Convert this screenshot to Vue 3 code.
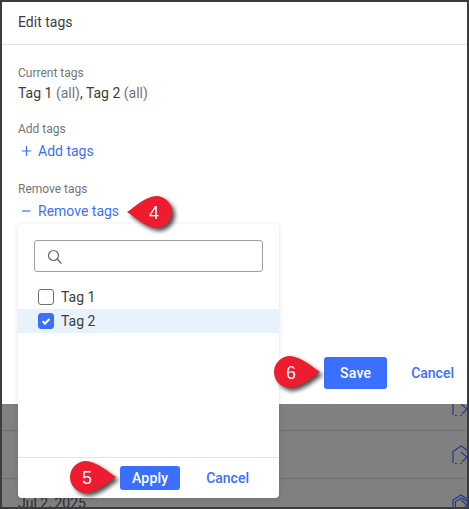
<template>
  <div class="frame">
    <div class="dialog">
      <div class="title">Edit tags</div>
      <div class="body">
        <div class="field">
          <div class="label">Current tags</div>
          <div class="value">Tag 1 <span class="muted">(all)</span>, Tag 2 <span class="muted">(all)</span></div>
        </div>
        <div class="field">
          <div class="label">Add tags</div>
          <a class="link">
            <svg width="12" height="12" viewBox="0 0 12 12"><path d="M5.5 1v10M.8 6h9.4" stroke="#3b6fff" stroke-width="1.2" fill="none" /></svg>
            Add tags
          </a>
        </div>
        <div class="field">
          <div class="label">Remove tags</div>
          <a class="link">
            <svg width="12" height="12" viewBox="0 0 12 12"><path d="M1 6h8.4" stroke="#3b6fff" stroke-width="1.2" fill="none" /></svg>
            Remove tags
          </a>
        </div>
      </div>
      <div class="actions">
        <button class="primary save">Save</button>
        <button class="ghost">Cancel</button>
      </div>
    </div>

    <div class="backdrop">
      <div v-for="row in rows" :key="row.id" class="row">
        <span class="date">{{ row.date }}</span>
        <svg class="row-icon" width="20" height="20" viewBox="0 0 20 20" fill="none" stroke="#24398c" stroke-width="1.2">
          <template v-if="row.stacked">
            <path d="M1 15V7l8-5 8 5" />
            <path d="M3.500 18V8.500l6-3.500 6 3.500" />
          </template>
          <path v-if="!row.stacked" d="M1 18V6.500L9 1l6 4" />
          <path v-if="!row.stacked" d="M3 18.500h2M8 18.500h2" />
          <path d="M9 7l6 5-5 5" />
        </svg>
      </div>
    </div>

    <div class="menu">
      <div class="search">
        <svg width="15" height="15" viewBox="0 0 15 15" fill="none" stroke="#666" stroke-width="1.2"><circle cx="6.500" cy="6.500" r="5" /><path d="M10 10l4.500 4.500" /></svg>
      </div>
      <div class="options">
        <label v-for="tag in tags" :key="tag.name" class="option" :class="{ on: tag.on }">
          <span class="box">
            <svg v-if="tag.on" width="12" height="12" viewBox="0 0 12 12"><path d="M2.500 6.200 5 8.500l4.500-4.500" fill="none" stroke="#fff" stroke-width="2" /></svg>
          </span>
          {{ tag.name }}
        </label>
      </div>
      <div class="menu-actions">
        <button class="primary apply">Apply</button>
        <button class="ghost">Cancel</button>
      </div>
    </div>

    <svg
      v-for="b in badges"
      :key="b.n"
      class="badge"
      :style="{ left: b.x + 'px', top: b.y + 'px' }"
      width="56"
      height="46"
      viewBox="0 0 56 46"
    >
      <path :d="b.d" fill="#ed1c2e" />
      <text :x="b.tx" y="28.500" text-anchor="middle">{{ b.n }}</text>
    </svg>
  </div>
</template>

<script setup>
const rows = [
  { id: 1, date: '' },
  { id: 2, date: '' },
  { id: 3, date: 'Jul 2, 2025', stacked: true },
];

const tags = [
  { name: 'Tag 1', on: false },
  { name: 'Tag 2', on: true },
];

// teardrops, tip on the left or on the right
const left = 'M2 22 C10 17 19 7 31 6 A16 16 0 0 1 31 38 C19 37 10 27 2 22Z';
const right = 'M52 22 C44 17 34 7 22 6 A16 16 0 0 0 22 38 C34 37 44 27 52 22Z';

// x and y are relative to the frame's inner box
const badges = [
  { n: 4, x: 123, y: 188, d: left, tx: 29 },
  { n: 5, x: 62, y: 453, d: right, tx: 23 },
  { n: 6, x: 266, y: 348, d: right, tx: 23 },
];
</script>

<style>
body {
  background: #3c3c3c;
}
</style>

<style scoped>
.frame {
  position: relative;
  width: 469px;
  height: 509px;
  box-sizing: border-box;
  border: 2px solid #3c3c3c;
  overflow: hidden;
  font-family: Roboto, sans-serif;
  color: #3d3d3d;
  background: #808080;
}
.dialog {
  height: 402px;
  background: #fff;
  display: flex;
  flex-direction: column;
}
.title {
  height: 43px;
  box-sizing: border-box;
  padding: 12px 16px 0;
  font-size: 14px;
  line-height: 16px;
  border-bottom: 1px solid #e4e4e4;
}
.body {
  padding: 21px 16px 0;
  flex: 1;
}
.field {
  margin-bottom: 21px;
}
.label {
  font-size: 12px;
  line-height: 14px;
  color: #757575;
}
.value {
  font-size: 14px;
  line-height: 16px;
  margin-top: 5px;
}
.muted {
  color: #757575;
}
.link {
  display: flex;
  align-items: center;
  gap: 5px;
  font-size: 14px;
  line-height: 20px;
  margin-top: 5px;
  color: #3b6fff;
}
.link svg {
  margin-left: 3px;
}
.actions {
  display: flex;
  justify-content: flex-end;
  align-items: center;
  height: 62px;
  padding: 0 13px 0 0;
  gap: 24px;
}
button {
  font-family: Roboto, sans-serif;
  font-weight: 500;
  font-size: 14px;
  border: 0;
  padding: 0;
}
.primary {
  background: #3b6fff;
  color: #fff;
  border-radius: 3px;
  letter-spacing: 0.2px;
}
.save {
  width: 63px;
  height: 32px;
}
.apply {
  width: 60px;
  height: 24px;
}
.ghost {
  background: none;
  color: #3b6fff;
}
.backdrop {
  overflow: hidden;
  height: 103px;
}
.row {
  height: 48px;
  box-sizing: border-box;
  border-bottom: 1px solid #6e6e6e;
  padding: 14px 0 0 16px;
  display: flex;
  justify-content: space-between;
  align-items: flex-start;
  font-size: 14px;
  line-height: 16px;
  color: #2c2c2c;
}
.row:first-child {
  margin-top: -21px;
}
.row:last-child {
  border-bottom: 0;
}
.date {
  margin-top: 2px;
}
.row-icon {
  flex: none;
  margin-right: -5px;
}
.menu {
  position: absolute;
  left: 16px;
  top: 222px;
  width: 261px;
  height: 274px;
  background: #fff;
  border-radius: 4px;
  box-shadow: 0 1px 5px rgba(0, 0, 0, 0.12);
  display: flex;
  flex-direction: column;
}
.search {
  margin: 16px 16px 13px;
  height: 32px;
  box-sizing: border-box;
  border: 1px solid #a0a0a0;
  border-radius: 3px;
  padding: 8px 12px;
}
.options {
  flex: 1;
}
.option {
  display: flex;
  align-items: center;
  gap: 7px;
  height: 24px;
  padding-left: 20px;
  font-size: 14px;
}
.option.on {
  background: #e8f2fc;
}
.box {
  width: 16px;
  height: 16px;
  box-sizing: border-box;
  border: 1px solid #6e6e6e;
  border-radius: 3px;
  display: flex;
  align-items: center;
  justify-content: center;
}
.on .box {
  background: #3b6fff;
  border-color: #3b6fff;
}
.menu-actions {
  height: 40px;
  border-top: 1px solid #e4e4e4;
  display: flex;
  justify-content: flex-end;
  align-items: center;
  gap: 26px;
  padding-right: 30px;
}
.badge {
  position: absolute;
  overflow: visible;
  filter: drop-shadow(3px 3px 2px rgba(0, 0, 0, 0.7));
}
.badge text {
  font-family: 'Liberation Sans', sans-serif;
  font-size: 18px;
  fill: #fff;
}
</style>
